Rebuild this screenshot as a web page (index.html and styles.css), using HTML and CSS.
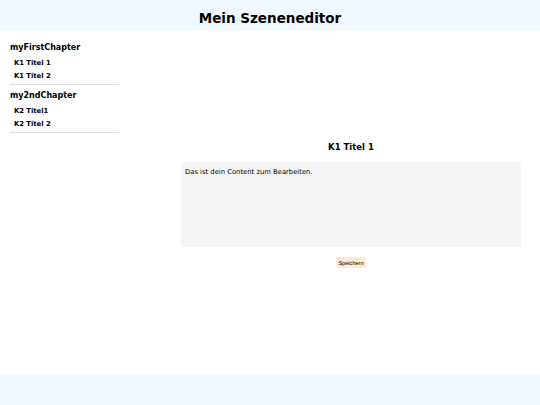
FILE: index.html
```html
<!DOCTYPE html>
<html lang="de">
<head>
<meta charset="utf-8">
<title>Mein Szeneneditor</title>
<link rel="stylesheet" href="styles.css">
</head>
<body>
<div class="page">
  <header class="top">Mein Szeneneditor</header>
  <div class="middle">
    <nav class="sidebar">
      <div class="chapter">
        <div class="chapter-title">myFirstChapter</div>
        <div class="scene">K1 Titel 1</div>
        <div class="scene">K1 Titel 2</div>
      </div>
      <div class="chapter">
        <div class="chapter-title">my2ndChapter</div>
        <div class="scene">K2 Titel1</div>
        <div class="scene">K2 Titel 2</div>
      </div>
    </nav>
    <main class="editor">
      <h2 class="scene-title">K1 Titel 1</h2>
      <textarea class="content">Das ist dein Content zum Bearbeiten.</textarea>
      <button class="save">Speichern</button>
    </main>
  </div>
  <footer class="bottom"></footer>
</div>
</body>
</html>
```

FILE: styles.css
```css
html, body {
  margin: 0;
  padding: 0;
  background: #ffffff;
}

body {
  font-family: "DejaVu Sans", Verdana, sans-serif;
  color: #000;
}

.page {
  height: 405px;
  display: flex;
  flex-direction: column;
}

.top {
  height: 30px;
  box-sizing: border-box;
  padding-top: 6px;
  line-height: 24px;
  background: #f0f8ff;
  text-align: center;
  font-weight: bold;
  font-size: 13.5px;
}

.middle {
  flex: 1;
  display: flex;
}

.sidebar {
  width: 109px;
  margin-left: 10px;
  padding-top: 7px;
}

.chapter {
  padding-top: 2px;
  padding-bottom: 1px;
  border-bottom: 1px solid #e0e0e0;
}

.chapter-title {
  font-weight: bold;
  font-size: 8px;
  line-height: 18px;
}

.scene {
  font-weight: bold;
  font-size: 6.8px;
  line-height: 13px;
  padding-left: 4px;
}

.editor {
  flex: 1;
  margin-left: 62px;
  margin-right: 19px;
  padding-top: 110px;
  display: flex;
  flex-direction: column;
  align-items: center;
}

.scene-title {
  margin: 0;
  font-size: 8.5px;
  line-height: 14px;
  font-weight: bold;
}

.content {
  margin-top: 8px;
  width: 100%;
  height: 85px;
  box-sizing: border-box;
  border: none;
  border-radius: 3px;
  background: #f5f5f5;
  padding: 6px 4px 4px;
  font-family: "DejaVu Sans", Verdana, sans-serif;
  font-size: 6.8px;
  line-height: 8px;
  color: #000;
  resize: none;
  outline: none;
}

.save {
  margin-top: 10px;
  width: 30px;
  height: 11px;
  padding: 0;
  border: none;
  border-radius: 2px;
  background: #faebd7;
  font-family: "Liberation Sans", Arial, sans-serif;
  font-size: 5.6px;
  color: #000;
}

.bottom {
  height: 30px;
  background: #f0f8ff;
}
```
